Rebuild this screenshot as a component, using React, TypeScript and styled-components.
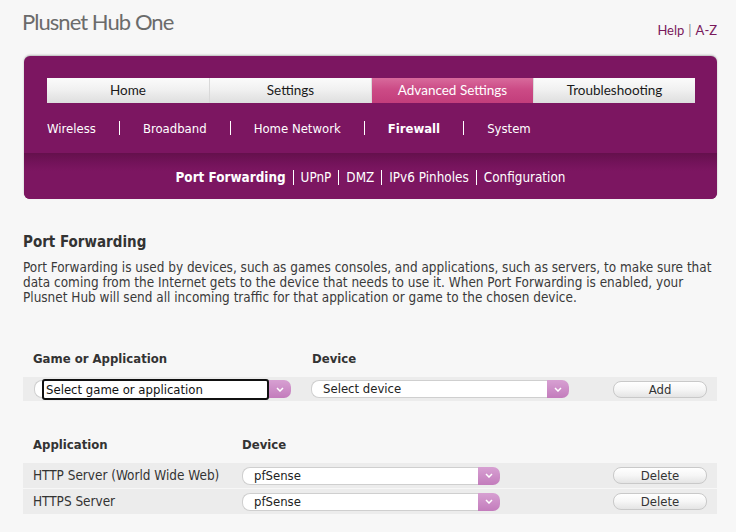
import React from "react";
import styled, { createGlobalStyle } from "styled-components";

const Global = createGlobalStyle`
  html, body { margin: 0; padding: 0; background: #f7f7f7; }
  body { font-family: "DejaVu Sans Condensed", "Liberation Sans", sans-serif; color: #333; }
`;

const Page = styled.div`
  width: 736px;
  height: 532px;
  overflow: hidden;
  background: #f7f7f7;
  padding: 0 19px 0 23px;
  box-sizing: border-box;
`;

const Header = styled.div`
  display: flex;
  justify-content: space-between;
  align-items: flex-start;
  height: 56px;
`;

const Title = styled.h1`
  margin: 8px 0 0 -1px;
  font-family: Lato, "Liberation Sans", sans-serif;
  font-weight: 400;
  font-size: 22px;
  line-height: 28px;
  color: #6b6b6b;
  letter-spacing: -0.95px;
`;

const TopLinks = styled.div`
  margin-top: 22px;
  font-family: Lato, "Liberation Sans", sans-serif;
  font-size: 13px;
  color: #7a1a5c;
  display: flex;
  gap: 4px;
`;

const Sep = styled.span`
  color: #888;
`;

const Panel = styled.div`
  margin-left: 1px;
  width: 693px;
  background: #7c1661;
  border-radius: 6px;
  box-shadow: 0 -1px 2px rgba(0, 0, 0, 0.25);
  overflow: hidden;
`;

const Tabs = styled.div`
  display: grid;
  grid-template-columns: repeat(4, 1fr);
  margin: 22px 22px 0 23px;
  height: 25px;
`;

const Tab = styled.div<{ $active?: boolean }>`
  display: flex;
  align-items: center;
  justify-content: center;
  padding-bottom: 1px;
  box-sizing: border-box;
  font-family: Lato, "Liberation Sans", sans-serif;
  font-size: 13.5px;
  color: ${(p) => (p.$active ? "#fff" : "#1a1a1a")};
  background: ${(p) =>
    p.$active
      ? "linear-gradient(#d86a9c 0%, #cc4b86 45%, #c23d7b 100%)"
      : "linear-gradient(#fbfbfb 0%, #f1f1f1 45%, #dedede 100%)"};
  border-left: 1px solid #d9d9d9;
  &:first-child { border-left: none; }
`;

const SubNav = styled.div`
  display: flex;
  align-items: center;
  height: 50px;
  padding-left: 23px;
  color: #fff;
  font-size: 13px;
`;

const SubItem = styled.span<{ $bold?: boolean }>`
  font-weight: ${(p) => (p.$bold ? 700 : 400)};
`;

const SubSep = styled.span`
  display: inline-block;
  width: 1px;
  height: 14px;
  background: #fff;
  margin: 0 23px;
`;

const ThirdNav = styled.div`
  height: 46px;
  display: flex;
  align-items: center;
  justify-content: center;
  padding-top: 2px;
  box-sizing: border-box;
  background: linear-gradient(#64104c 0px, #73135a 10px, #7c1661 18px);
  color: #fff;
  font-size: 13.4px;
`;

const ThirdItem = styled.span<{ $bold?: boolean }>`
  font-weight: ${(p) => (p.$bold ? 700 : 400)};
`;

const ThirdSep = styled.span`
  display: inline-block;
  width: 1px;
  height: 15px;
  background: #fff;
  margin: 0 7px;
`;

const Section = styled.div`
  margin-top: 34px;
`;

const Heading = styled.h2`
  margin: 0;
  font-size: 15px;
  line-height: 18px;
  font-weight: 700;
  color: #333;
`;

const Para = styled.p`
  margin: 9px 0 0;
  font-size: 13.45px;
  line-height: 15px;
  color: #3a3a3a;
  width: 698px;
`;

const FormHead = styled.div`
  margin-top: 43px;
  display: grid;
  grid-template-columns: 279px 1fr;
  padding-left: 10px;
  font-weight: 700;
  font-size: 13px;
  color: #333;
  height: 20px;
  align-items: center;
`;

const FormRow = styled.div`
  margin-top: 9px;
  width: 694px;
  height: 24px;
  background: #ececec;
  display: grid;
  grid-template-columns: 277px 302px 95px;
  padding-left: 11px;
  align-items: center;
  box-sizing: border-box;
`;

const TableHead = styled.div`
  margin-top: 33px;
  display: grid;
  grid-template-columns: 209px 1fr;
  padding-left: 10px;
  font-weight: 700;
  font-size: 13px;
  color: #333;
  height: 20px;
  align-items: center;
`;

const TableRow = styled.div<{ $first?: boolean }>`
  margin-top: ${(p) => (p.$first ? "9px" : "1px")};
  width: 694px;
  height: 25px;
  background: #ececec;
  display: grid;
  grid-template-columns: 209px 371px 95px;
  padding-left: 10px;
  align-items: center;
  box-sizing: border-box;
  font-size: 13.45px;
  color: #333;
`;

const SelectBox = styled.div<{ $w: number }>`
  position: relative;
  width: ${(p) => p.$w}px;
  height: 18px;
  display: flex;
  box-sizing: border-box;
`;

const SelectField = styled.div`
  flex: 1;
  background: #fff;
  border: 1px solid #cfcfcf;
  border-right: none;
  border-radius: 8px 0 0 8px;
  font-size: 13px;
  line-height: 16px;
  padding-left: 11px;
  color: #222;
  white-space: nowrap;
  overflow: hidden;
`;

const Arrow = styled.div`
  width: 22px;
  height: 18px;
  background: linear-gradient(#d7a0d2, #c37cbc);
  border-radius: 0 7px 7px 0;
  display: flex;
  align-items: center;
  justify-content: center;
`;

const Focus = styled.div`
  position: absolute;
  left: 8px;
  right: 22px;
  top: -1px;
  bottom: -2px;
  border: 2px solid #111;
  border-radius: 3px;
  background: #fff;
  font-size: 13px;
  line-height: 17px;
  padding-left: 2px;
  color: #111;
  white-space: nowrap;
`;

const Button = styled.div`
  width: 94px;
  height: 17px;
  box-sizing: border-box;
  border: 1px solid #c9c9c9;
  border-radius: 8px;
  background: linear-gradient(#ffffff 0%, #f6f6f6 50%, #e4e4e4 100%);
  font-size: 13px;
  line-height: 15px;
  text-align: center;
  color: #333;
`;

const Chevron = () => (
  <svg width="8" height="5" viewBox="0 0 8 5">
    <path d="M1 1 L4 4 L7 1" stroke="#fff" strokeWidth="1.5" fill="none" />
  </svg>
);

const Select = ({ w, text, focused }: { w: number; text: string; focused?: boolean }) => (
  <SelectBox $w={w}>
    <SelectField>{focused ? "" : text}</SelectField>
    <Arrow>
      <Chevron />
    </Arrow>
    {focused && <Focus>{text}</Focus>}
  </SelectBox>
);

export default function App() {
  return (
    <>
      <Global />
      <Page>
        <Header>
          <Title>Plusnet Hub One</Title>
          <TopLinks>
            <span>Help</span>
            <Sep>|</Sep>
            <span>A-Z</span>
          </TopLinks>
        </Header>
        <Panel>
          <Tabs>
            <Tab>Home</Tab>
            <Tab>Settings</Tab>
            <Tab $active>Advanced Settings</Tab>
            <Tab>Troubleshooting</Tab>
          </Tabs>
          <SubNav>
            <SubItem>Wireless</SubItem>
            <SubSep />
            <SubItem>Broadband</SubItem>
            <SubSep />
            <SubItem>Home Network</SubItem>
            <SubSep />
            <SubItem $bold>Firewall</SubItem>
            <SubSep />
            <SubItem>System</SubItem>
          </SubNav>
          <ThirdNav>
            <ThirdItem $bold>Port Forwarding</ThirdItem>
            <ThirdSep />
            <ThirdItem>UPnP</ThirdItem>
            <ThirdSep />
            <ThirdItem>DMZ</ThirdItem>
            <ThirdSep />
            <ThirdItem>IPv6 Pinholes</ThirdItem>
            <ThirdSep />
            <ThirdItem>Configuration</ThirdItem>
          </ThirdNav>
        </Panel>
        <Section>
          <Heading>Port Forwarding</Heading>
          <Para>
            Port Forwarding is used by devices, such as games consoles, and applications, such as servers, to make sure that
            data coming from the Internet gets to the device that needs to use it. When Port Forwarding is enabled, your
            Plusnet Hub will send all incoming traffic for that application or game to the chosen device.
          </Para>
        </Section>
        <FormHead>
          <span>Game or Application</span>
          <span>Device</span>
        </FormHead>
        <FormRow>
          <Select w={257} text="Select game or application" focused />
          <Select w={258} text="Select device" />
          <Button>Add</Button>
        </FormRow>
        <TableHead>
          <span>Application</span>
          <span>Device</span>
        </TableHead>
        <TableRow $first>
          <span>HTTP Server (World Wide Web)</span>
          <Select w={258} text="pfSense" />
          <Button>Delete</Button>
        </TableRow>
        <TableRow>
          <span>HTTPS Server</span>
          <Select w={258} text="pfSense" />
          <Button>Delete</Button>
        </TableRow>
      </Page>
    </>
  );
}
